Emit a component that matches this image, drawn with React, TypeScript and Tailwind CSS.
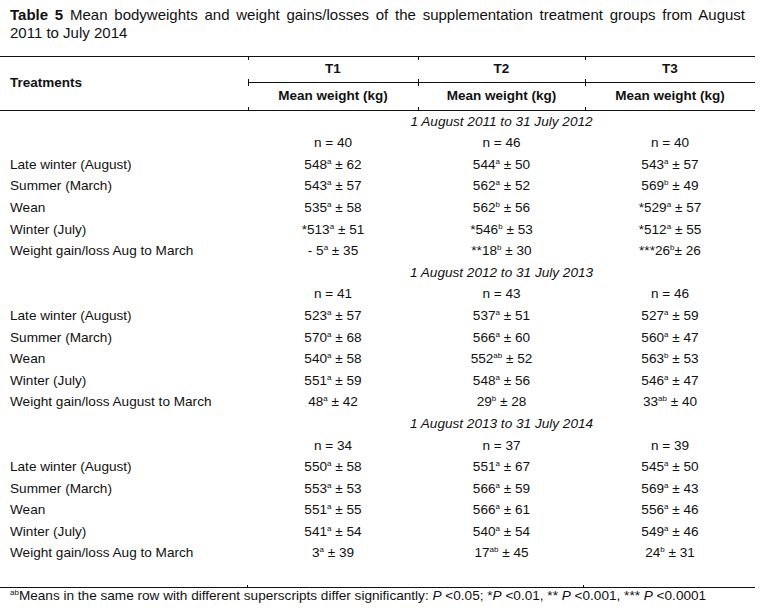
import React from "react";

type Cell = { pre?: string; v: string; sup: string; sd: string; tight?: boolean };

type Period = {
  label: string;
  n: [number, number, number];
  rows: { name: string; cells: Cell[] }[];
};

const c = (pre: string, v: string, sup: string, sd: string, tight = false): Cell => ({
  pre,
  v,
  sup,
  sd,
  tight,
});

const PERIODS: Period[] = [
  {
    label: "1 August 2011 to 31 July 2012",
    n: [40, 46, 40],
    rows: [
      { name: "Late winter (August)", cells: [c("", "548", "a", "62"), c("", "544", "a", "50"), c("", "543", "a", "57")] },
      { name: "Summer (March)", cells: [c("", "543", "a", "57"), c("", "562", "a", "52"), c("", "569", "b", "49")] },
      { name: "Wean", cells: [c("", "535", "a", "58"), c("", "562", "b", "56"), c("*", "529", "a", "57")] },
      { name: "Winter (July)", cells: [c("*", "513", "a", "51"), c("*", "546", "b", "53"), c("*", "512", "a", "55")] },
      {
        name: "Weight gain/loss Aug to March",
        cells: [c("- ", "5", "a", "35"), c("**", "18", "b", "30"), c("***", "26", "b", "26", true)],
      },
    ],
  },
  {
    label: "1 August 2012 to 31 July 2013",
    n: [41, 43, 46],
    rows: [
      { name: "Late winter (August)", cells: [c("", "523", "a", "57"), c("", "537", "a", "51"), c("", "527", "a", "59")] },
      { name: "Summer (March)", cells: [c("", "570", "a", "68"), c("", "566", "a", "60"), c("", "560", "a", "47")] },
      { name: "Wean", cells: [c("", "540", "a", "58"), c("", "552", "ab", "52"), c("", "563", "b", "53")] },
      { name: "Winter (July)", cells: [c("", "551", "a", "59"), c("", "548", "a", "56"), c("", "546", "a", "47")] },
      {
        name: "Weight gain/loss August to March",
        cells: [c("", "48", "a", "42"), c("", "29", "b", "28"), c("", "33", "ab", "40")],
      },
    ],
  },
  {
    label: "1 August 2013 to 31 July 2014",
    n: [34, 37, 39],
    rows: [
      { name: "Late winter (August)", cells: [c("", "550", "a", "58"), c("", "551", "a", "67"), c("", "545", "a", "50")] },
      { name: "Summer (March)", cells: [c("", "553", "a", "53"), c("", "566", "a", "59"), c("", "569", "a", "43")] },
      { name: "Wean", cells: [c("", "551", "a", "55"), c("", "566", "a", "61"), c("", "556", "a", "46")] },
      { name: "Winter (July)", cells: [c("", "541", "a", "54"), c("", "540", "a", "54"), c("", "549", "a", "46")] },
      {
        name: "Weight gain/loss Aug to March",
        cells: [c("", "3", "a", "39"), c("", "17", "ab", "45"), c("", "24", "b", "31")],
      },
    ],
  },
];

const GRID = "grid grid-cols-[248px_170px_167px_170px]";

function Sup({ children }: { children: React.ReactNode }) {
  return <sup className="relative -top-[5px] text-[8px] leading-none">{children}</sup>;
}

function Value({ cell }: { cell: Cell }) {
  return (
    <span>
      {cell.pre}
      {cell.v}
      <Sup>{cell.sup}</Sup>
      {cell.tight ? "" : " "}± {cell.sd}
    </span>
  );
}

// small vertical tick where a column edge meets a rule
function Tick({ at }: { at: "top" | "bottom" }) {
  return (
    <span
      className={`absolute left-0 h-[3px] w-px bg-[#111] ${at === "top" ? "top-0" : "bottom-0"}`}
    />
  );
}

export default function App() {
  return (
    <div className="w-[760px] bg-white text-[#111]" style={{ fontFamily: '"Liberation Sans", Arial, sans-serif' }}>
      <div className="w-[755px] px-[10px] pt-[6px] pb-[14px] text-justify text-[15px] leading-[18px]">
        <b>Table 5</b> Mean bodyweights and weight gains/losses of the supplementation treatment groups
        from August 2011 to July 2014
      </div>

      <div className="w-[755px]">
        {/* header */}
        <div className={`${GRID} border-y border-[#111] text-[13.5px] font-bold`}>
          <div className="row-span-2 flex items-center pl-[10px]">Treatments</div>
          {["T1", "T2", "T3"].map((t) => (
            <div key={t} className="relative flex h-[26px] items-center justify-center border-b border-[#111]">
              <Tick at="top" />
              <Tick at="bottom" />
              {t}
            </div>
          ))}
          {[0, 1, 2].map((i) => (
            <div key={i} className="relative flex h-[27px] items-center justify-center">
              <Tick at="top" />
              <Tick at="bottom" />
              Mean weight (kg)
            </div>
          ))}
        </div>

        {/* body */}
        <div className="text-[13.6px]">
          {PERIODS.map((p) => (
            <div key={p.label}>
              <div className={`${GRID} h-[21.6px] items-center`}>
                <div />
                <div className="col-span-3 text-center italic">{p.label}</div>
              </div>
              <div className={`${GRID} h-[21.6px] items-center`}>
                <div />
                {p.n.map((n, i) => (
                  <div key={i} className="text-center">
                    n = {n}
                  </div>
                ))}
              </div>
              {p.rows.map((r) => (
                <div key={r.name} className={`${GRID} h-[21.6px] items-center`}>
                  <div className="pl-[10px]">{r.name}</div>
                  {r.cells.map((cell, i) => (
                    <div key={i} className="text-center">
                      <Value cell={cell} />
                    </div>
                  ))}
                </div>
              ))}
            </div>
          ))}
          <div className="h-[22.4px]" />
        </div>

        {/* footnote */}
        <div className="relative border-t border-[#111] pl-[10px] text-[13.6px] leading-[16px]">
          <span className="absolute -top-[3px] left-[247px] h-[3px] w-px bg-[#111]" />
          <span className="absolute -top-[3px] left-[583px] h-[3px] w-px bg-[#111]" />
          <Sup>ab</Sup>Means in the same row with different superscripts differ significantly: <i>P</i> &lt;0.05;
          *<i>P</i> &lt;0.01, ** <i>P</i> &lt;0.001, *** <i>P</i> &lt;0.0001
        </div>
      </div>
    </div>
  );
}
